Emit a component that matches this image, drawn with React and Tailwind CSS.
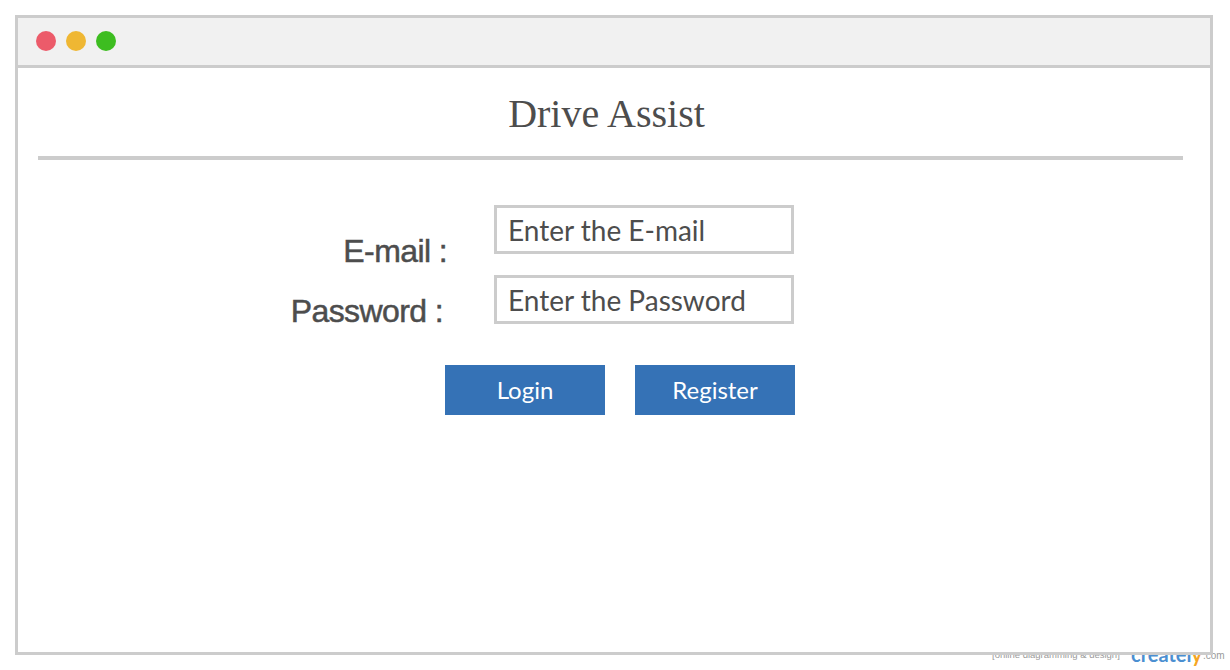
import React from "react";

const lato = { fontFamily: "Lato, 'Open Sans', sans-serif" };

function Dots() {
  return (
    <div className="flex items-center gap-[10px] pl-[18px]">
      <span className="h-[20px] w-[20px] rounded-full bg-[#ec5b6a]" />
      <span className="h-[20px] w-[20px] rounded-full bg-[#efb733]" />
      <span className="h-[20px] w-[20px] rounded-full bg-[#3dbd20]" />
    </div>
  );
}

function Field({ label, placeholder, labelClass, rowClass }) {
  return (
    <div className={"flex h-[49px] items-start " + rowClass}>
      <div
        className={
          "w-[429px] shrink-0 text-right text-[32px] leading-[32px] tracking-[-0.6px] text-[#4d4d4d] [-webkit-text-stroke:0.5px_#4d4d4d] font-['Liberation_Sans',Arial,sans-serif] " +
          labelClass
        }
      >
        {label}
      </div>
      <div className="ml-[47px] flex h-[49px] w-[300px] shrink-0 items-center border-[3px] border-[#cccccc] bg-white pl-[11px]">
        <span className="font-['Lato',sans-serif] text-[28px] leading-none text-[#4d4d4d]">
          {placeholder}
        </span>
      </div>
    </div>
  );
}

export default function App() {
  return (
    <div className="relative h-[670px] w-[1230px] overflow-hidden bg-white">
      {/* creately watermark, sits under the frame */}
      <div className="absolute left-[992px] top-[650px] whitespace-nowrap font-['Liberation_Sans',Arial,sans-serif] text-[9.5px] leading-[10px] text-[#9a9a9a]">
        [online diagramming &amp; design]
      </div>
      <div className="absolute left-[1131px] top-[644px] whitespace-nowrap font-['Lato',sans-serif] text-[20px] font-bold leading-[20px] text-[#4b8fd1]">
        createl<span className="text-[#f5a623]">y</span>
      </div>
      <div className="absolute left-[1203px] top-[651px] font-['Liberation_Sans',Arial,sans-serif] text-[10px] leading-[10px] text-[#9a9a9a]">
        .com
      </div>

      <div className="relative ml-[15px] mt-[15px] h-[640px] w-[1198px] border-[3px] border-[#cccccc] bg-white">
        {/* title bar */}
        <div className="flex h-[50px] items-center border-b-[3px] border-[#cccccc] bg-[#f1f1f1] pb-[1px]">
          <Dots />
        </div>

        {/* header */}
        <div className="pt-[26px]">
          <h1 className="pr-[15px] text-center font-['Liberation_Serif','Times_New_Roman',serif] text-[40px] leading-[40px] text-[#4d4d4d]">
            Drive Assist
          </h1>
          <div className="ml-[20px] mt-[22px] h-[4px] w-[1145px] bg-[#cccccc]" />
        </div>

        {/* form */}
        <div className="pt-[45px]">
          <Field label="E-mail :" placeholder="Enter the E-mail" labelClass="mt-[30px]" rowClass="" />
          <Field
            label="Password :"
            placeholder="Enter the Password"
            labelClass="mt-[20px] pr-[4px]"
            rowClass="mt-[21px]"
          />
          <div className="mt-[41px] flex gap-[30px] pl-[427px]" style={lato}>
            <button className="flex h-[50px] w-[160px] items-center justify-center bg-[#3572b6] text-[24px] text-white">
              Login
            </button>
            <button className="flex h-[50px] w-[160px] items-center justify-center bg-[#3572b6] text-[24px] text-white">
              Register
            </button>
          </div>
        </div>
      </div>
    </div>
  );
}
